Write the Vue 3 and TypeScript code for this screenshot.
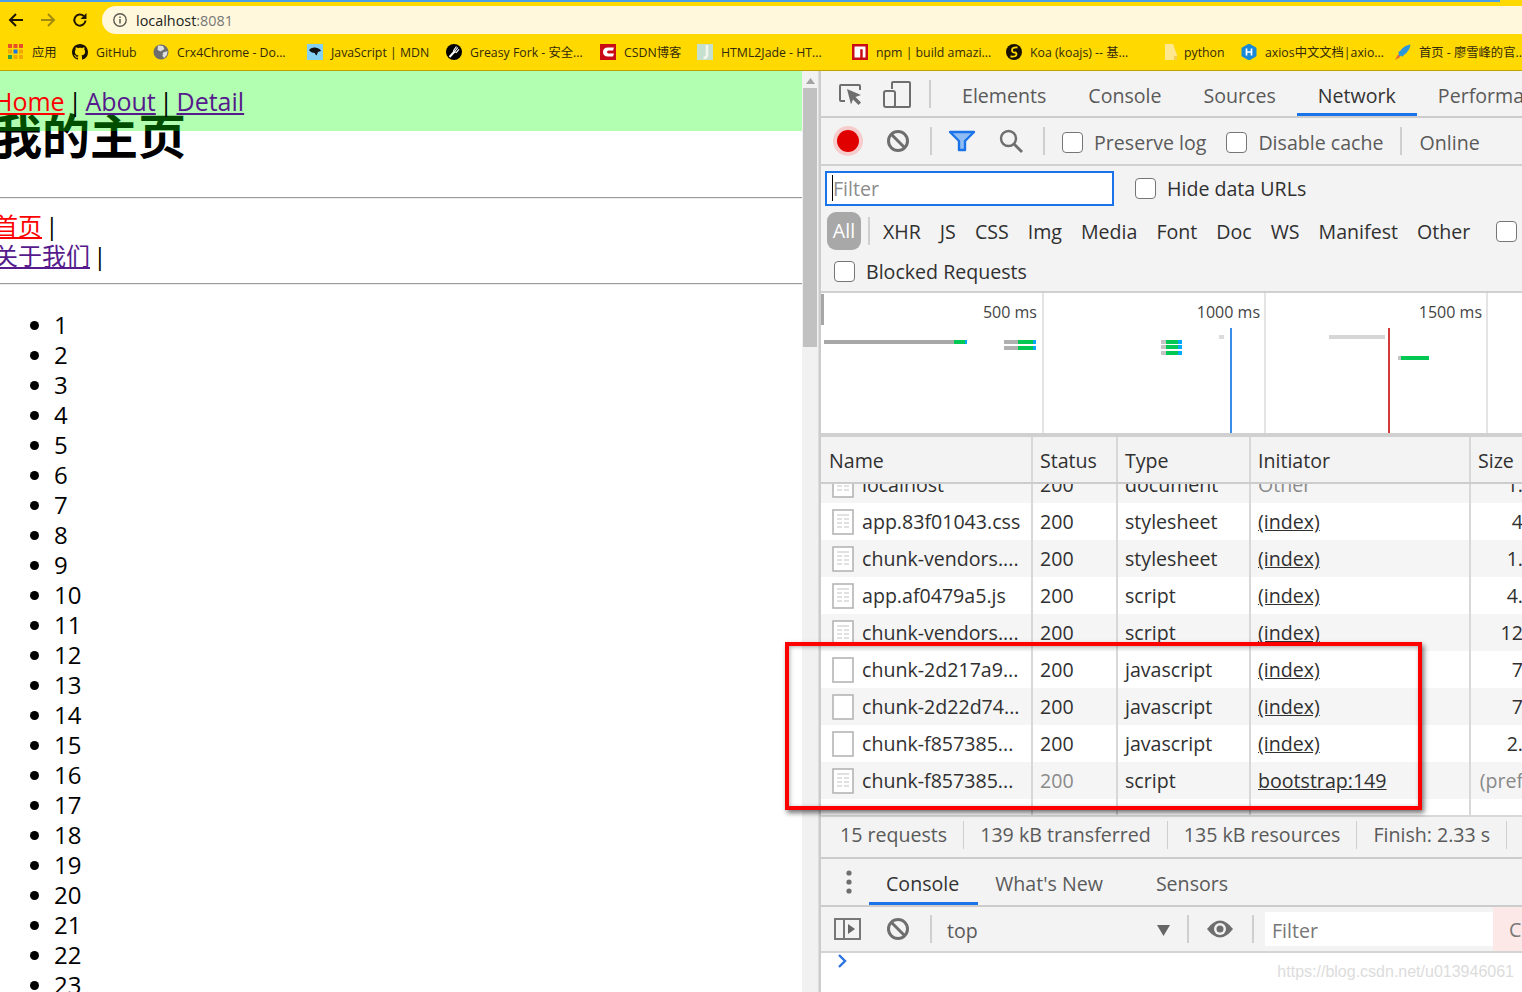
<template>
  <div class="screen">
    <!-- 浏览器顶栏 -->
    <header class="chrome">
      <div class="progress"></div>
      <div class="nav-row">
        <button class="nav-btn">
          <svg width="18" height="18" viewBox="0 0 18 18"><path d="M16 9H3M9 3L3 9l6 6" fill="none" stroke="#201600" stroke-width="2"/></svg>
        </button>
        <button class="nav-btn">
          <svg width="18" height="18" viewBox="0 0 18 18"><path d="M2 9h13M9 3l6 6-6 6" fill="none" stroke="#a58a10" stroke-width="2"/></svg>
        </button>
        <button class="nav-btn">
          <svg width="18" height="18" viewBox="0 0 18 18"><path d="M14.5 9.5A5.6 5.6 0 1 1 12.8 5" fill="none" stroke="#201600" stroke-width="2"/><path d="M15.5 2v6h-6z" fill="#201600"/></svg>
        </button>
        <div class="omnibox">
          <svg width="16" height="16" viewBox="0 0 16 16"><circle cx="8" cy="8" r="6.2" fill="none" stroke="#5c5a50" stroke-width="1.4"/><path d="M8 7v4.4M8 4.4v1.5" stroke="#5c5a50" stroke-width="1.5"/></svg>
          <span class="url">localhost<span class="port">:8081</span></span>
        </div>
      </div>
      <div class="bookmarks">
        <div v-for="b in bookmarks" :key="b.label" class="bookmark" :class="{ tight: b.icon === 'folder' }" :style="{ width: b.w + 'px' }">
          <svg class="bm-icon" width="16" height="16" viewBox="0 0 16 16">
            <template v-if="b.icon === 'apps'">
              <rect v-for="c in appDots" :key="c.k" :x="c.x" :y="c.y" width="4" height="4" :fill="c.fill" />
            </template>
            <path v-else-if="b.icon === 'github'" fill="#1a1200" d="M8 0C3.58 0 0 3.58 0 8c0 3.54 2.29 6.53 5.47 7.59.4.07.55-.17.55-.38 0-.19-.01-.82-.01-1.49-2.01.37-2.53-.49-2.69-.94-.09-.23-.48-.94-.82-1.13-.28-.15-.68-.52-.01-.53.63-.01 1.08.58 1.23.82.72 1.21 1.87.87 2.33.66.07-.52.28-.87.51-1.07-1.78-.2-3.64-.89-3.64-3.95 0-.87.31-1.59.82-2.15-.08-.2-.36-1.02.08-2.12 0 0 .67-.21 2.2.82.64-.18 1.32-.27 2-.27s1.36.09 2 .27c1.53-1.04 2.2-.82 2.2-.82.44 1.1.16 1.92.08 2.12.51.56.82 1.27.82 2.15 0 3.07-1.87 3.75-3.65 3.95.29.25.54.73.54 1.48 0 1.07-.01 1.93-.01 2.2 0 .21.15.46.55.38A8.01 8.01 0 0 0 16 8c0-4.42-3.58-8-8-8z" />
            <template v-else-if="b.icon === 'globe'">
              <circle cx="8" cy="8" r="7.5" fill="#6d6d6d" />
              <path d="M5 1.500l5 .5 1.500 3-4 2.500-3-1.500zM10 8.500l4.500-1.500-.5 4-3 3-1.500-2z" fill="#dedede" />
            </template>
            <template v-else-if="b.icon === 'mdn'">
              <rect width="16" height="16" fill="#83d0f2" />
              <path d="M2 6q2-3 6-2.500 5 .5 6 3.500-2 .5-3 1l-1.500 3.500-1.500-1.500V9Q4 9 2 6z" fill="#111" />
            </template>
            <template v-else-if="b.icon === 'greasy'">
              <circle cx="8" cy="8" r="8" fill="#000" />
              <path d="M3.500 13l5-5.500" stroke="#fff" stroke-width="2" />
              <path d="M7.500 6.500l3-4M8.800 7.500l3-4M10 8.800l3-3.500" stroke="#fff" stroke-width="1.200" />
              <path d="M7.500 6.500l2 2.300" stroke="#fff" stroke-width="1.500" />
            </template>
            <template v-else-if="b.icon === 'csdn'">
              <rect width="16" height="16" fill="#ca0c16" />
              <path d="M14 3.500H8Q3 3.700 3 8t5 4.500h5l1-3H8.500Q7 9.400 7 8t1.500-1.500H13z" fill="#fff" />
            </template>
            <template v-else-if="b.icon === 'jade'">
              <rect x="0" width="16" height="16" fill="#c6e0cf" />
              <path d="M10 1v10q0 3-3.500 3" fill="none" stroke="#f4f6ee" stroke-width="2.600" />
            </template>
            <template v-else-if="b.icon === 'npm'">
              <rect width="16" height="16" fill="#cb0c12" />
              <path d="M2.500 2.500h11v11h-2.800V5.300H8.200v8.200H2.500z" fill="#fff" />
            </template>
            <template v-else-if="b.icon === 'koa'">
              <circle cx="8" cy="8" r="8" fill="#1a1200" />
              <path d="M11.500 3.500Q6 3 6 6t3.500 2.500q2 1.500 0 3.500-2 1-5 .5" fill="none" stroke="#ffd900" stroke-width="1.800" />
            </template>
            <template v-else-if="b.icon === 'folder'">
              <path d="M2 0h8l4 11v5H2z" fill="#ffe88f" />
              <path d="M11 12h3v4h-3z" fill="#f6cf4f" />
            </template>
            <template v-else-if="b.icon === 'hex'">
              <path d="M8 0l7 4v8l-7 4-7-4V4z" fill="#1789d8" stroke="#1789d8" stroke-linejoin="round" />
              <path d="M5.500 4.500v7M10.500 4.500v7M5.500 8h5" stroke="#fff" stroke-width="1.700" />
            </template>
            <template v-else>
              <path d="M15.500 .5Q9 1.500 5.500 6.500L3 8.500l1 1-1 2.500 1.500 .5 2-1 .5 1.500 2.500-2.500Q14.500 7 15.500 .5z" fill="#2a96dc" />
              <path d="M0 16l3-5.500 2.500 2.500z" fill="#ee6a32" />
            </template>
          </svg>
          <span class="bm-label">{{ b.label }}</span>
        </div>
      </div>
    </header>

    <main class="workspace">
      <!-- 页面内容 -->
      <section class="page">
        <nav class="page-nav">
          <a class="link-active">Home</a> | <a class="link-visited">About</a> | <a class="link-visited">Detail</a>
        </nav>
        <div class="page-body">
          <h1>我的主页</h1>
          <hr />
          <div class="sub-nav">
            <div><a class="link-active">首页</a> |</div>
            <div><a class="link-visited">关于我们</a> |</div>
          </div>
          <hr />
          <ul>
            <li v-for="n in 23" :key="n">{{ n }}</li>
          </ul>
        </div>
      </section>

      <div class="scrollbar">
        <svg class="scroll-arrow" width="9" height="6" viewBox="0 0 9 6"><path d="M4.500 0L9 6H0z" fill="#a3a3a3" /></svg>
        <div class="scroll-thumb"></div>
      </div>

      <!-- DevTools -->
      <section class="devtools">
        <div class="dt-tabs">
          <span class="dt-icons">
            <svg width="28" height="28" viewBox="0 0 28 28"><path d="M9 21H5Q4 21 4 20V6Q4 5 5 5h18q1 0 1 1v4" fill="none" stroke="#6e6e6e" stroke-width="2"/><path d="M11 9l14 6-5.500 2 5.500 5.500-2.500 2.500-5.500-5.500-2 5z" fill="#6e6e6e"/></svg>
            <svg width="28" height="28" viewBox="0 0 28 28"><path d="M9 9V3q0-1 1-1h16q1 0 1 1v23q0 1-1 1H4" fill="none" stroke="#6e6e6e" stroke-width="2"/><rect x="1" y="11" width="11" height="16" rx="2" fill="#f3f3f3" stroke="#6e6e6e" stroke-width="2"/></svg>
          </span>
          <i class="vsep"></i>
          <span v-for="t in mainTabs" :key="t" class="dt-tab" :class="{ active: t === 'Network' }">{{ t }}</span>
        </div>

        <div class="dt-toolbar">
          <svg class="record" width="32" height="32" viewBox="0 0 32 32"><circle cx="16" cy="16" r="15" fill="#f6cccc"/><circle cx="16" cy="16" r="11" fill="#e00000"/></svg>
          <svg class="tool" width="26" height="26" viewBox="0 0 26 26"><circle cx="13" cy="13" r="9.500" fill="none" stroke="#6e6e6e" stroke-width="3"/><path d="M6.500 6.500l13 13" stroke="#6e6e6e" stroke-width="3"/></svg>
          <i class="vsep"></i>
          <svg class="tool funnel" width="28" height="24" viewBox="0 0 28 24"><path d="M2 3h24l-9 9v9h-6v-9z" fill="#8fbdf3" stroke="#1a73e8" stroke-width="2.400" stroke-linejoin="round"/></svg>
          <svg class="tool" width="26" height="26" viewBox="0 0 26 26"><circle cx="10.500" cy="10.500" r="7.500" fill="none" stroke="#6e6e6e" stroke-width="2.400"/><path d="M16 16l8 8" stroke="#6e6e6e" stroke-width="2.800"/></svg>
          <i class="vsep"></i>
          <label class="check muted"><i class="box"></i>Preserve log</label>
          <label class="check muted"><i class="box"></i>Disable cache</label>
          <i class="vsep"></i>
          <span class="muted online">Online</span>
        </div>

        <div class="dt-filter">
          <div class="filter-input"><i class="caret"></i>Filter</div>
          <label class="check"><i class="box"></i>Hide data URLs</label>
        </div>

        <div class="dt-types">
          <span class="pill">All</span>
          <i class="vsep"></i>
          <span v-for="t in types" :key="t" class="type">{{ t }}</span>
          <i class="box types-box"></i>
        </div>

        <div class="dt-blocked">
          <label class="check"><i class="box"></i>Blocked Requests</label>
        </div>

        <!-- 时间线，条形按时间定位 -->
        <div class="overview">
          <i class="handle"></i>
          <i v-for="g in gridLines" :key="g" class="grid-line" :style="{ left: g + 'px' }"></i>
          <span v-for="l in timeLabels" :key="l.t" class="time-label" :style="{ right: l.r + 'px' }">{{ l.t }}</span>
          <i
            v-for="(b, i) in timeBars"
            :key="i"
            class="time-bar"
            :style="{ left: b.x + 'px', top: b.y + 'px', width: b.w + 'px', height: b.h + 'px', background: b.c }"
          ></i>
        </div>

        <div class="net-head">
          <span v-for="c in columns" :key="c" class="cell">{{ c }}</span>
        </div>

        <div class="net-rows">
          <div class="net-rows-inner">
            <div v-for="(r, i) in rows" :key="i" class="net-row" :class="{ odd: i % 2 === 0 }">
              <span class="cell name-cell">
                <svg width="22" height="26" viewBox="0 0 22 26" class="file-icon">
                  <rect x="1" y="1" width="20" height="24" fill="#fff" stroke="#b5b5b5" stroke-width="1.600"/>
                  <path v-if="r.lines" d="M5 6h12M5 10h5M12 10h5M5 14h5M12 14h5M5 18h5M12 18h5" stroke="#d8d8d8" stroke-width="1.500"/>
                </svg>
                {{ r.name }}
              </span>
              <span class="cell" :class="{ dim: r.dim }">{{ r.status }}</span>
              <span class="cell">{{ r.type }}</span>
              <span class="cell" :class="{ dim: r.initDim }"><u v-if="!r.initDim">{{ r.init }}</u><template v-else>{{ r.init }}</template></span>
              <span class="cell size-cell" :class="{ dim: r.sizeDim }">{{ r.size }}</span>
            </div>
            <div class="net-row">
              <span v-for="c in columns" :key="c" class="cell"></span>
            </div>
          </div>
        </div>

        <div class="net-summary">
          <span v-for="s in summary" :key="s">{{ s }}</span>
        </div>

        <div class="drawer-tabs">
          <svg width="6" height="24" viewBox="0 0 6 24"><circle cx="3" cy="3" r="2.600" fill="#6e6e6e"/><circle cx="3" cy="12" r="2.600" fill="#6e6e6e"/><circle cx="3" cy="21" r="2.600" fill="#6e6e6e"/></svg>
          <span class="drawer-tab active">Console</span>
          <span class="drawer-tab">What's New</span>
          <span class="drawer-tab">Sensors</span>
        </div>

        <div class="console-bar">
          <svg width="28" height="24" viewBox="0 0 28 24"><rect x="1" y="2" width="25" height="20" fill="none" stroke="#777" stroke-width="2"/><path d="M10 2v20" stroke="#777" stroke-width="2"/><path d="M14 7l7 5-7 5z" fill="#666"/></svg>
          <svg class="stop" width="26" height="26" viewBox="0 0 26 26"><circle cx="13" cy="13" r="9.500" fill="none" stroke="#6e6e6e" stroke-width="3"/><path d="M6.500 6.500l13 13" stroke="#6e6e6e" stroke-width="3"/></svg>
          <i class="vsep"></i>
          <span class="context">top<svg width="13" height="11" viewBox="0 0 13 11"><path d="M0 0h13L6.500 11z" fill="#666"/></svg></span>
          <i class="vsep"></i>
          <svg class="eye" width="28" height="20" viewBox="0 0 28 20"><path d="M1 10Q14-7 27 10 14 27 1 10z" fill="#6e6e6e"/><circle cx="14" cy="10" r="6" fill="#f3f3f3"/><circle cx="14" cy="10" r="3.500" fill="#6e6e6e"/></svg>
          <i class="vsep"></i>
          <span class="console-filter">Filter</span>
          <span class="console-flag">C</span>
        </div>

        <div class="console-body">
          <svg width="10" height="14" viewBox="0 0 10 14"><path d="M2 1l6 6-6 6" fill="none" stroke="#2a73e0" stroke-width="2.400"/></svg>
          <span class="watermark">https://blog.csdn.net/u013946061</span>
        </div>
      </section>

      <!-- 截图上的红色标注框 -->
      <div class="annotation"></div>
    </main>
  </div>
</template>

<script setup lang="ts">
interface Bookmark {
  label: string
  icon: string
  w: number
}

interface NetRow {
  name: string
  status: string
  type: string
  init: string
  size: string
  lines: boolean
  dim?: boolean
  initDim?: boolean
  sizeDim?: boolean
}

const bookmarks: Bookmark[] = [
  { label: '应用', icon: 'apps', w: 64 },
  { label: 'GitHub', icon: 'github', w: 81 },
  { label: 'Crx4Chrome - Do...', icon: 'globe', w: 154 },
  { label: 'JavaScript | MDN', icon: 'mdn', w: 139 },
  { label: 'Greasy Fork - 安全...', icon: 'greasy', w: 154 },
  { label: 'CSDN博客', icon: 'csdn', w: 97 },
  { label: 'HTML2Jade - HT...', icon: 'jade', w: 155 },
  { label: 'npm | build amazi...', icon: 'npm', w: 154 },
  { label: 'Koa (koajs) -- 基...', icon: 'koa', w: 157 },
  { label: 'python', icon: 'folder', w: 78 },
  { label: 'axios中文文档|axio...', icon: 'hex', w: 154 },
  { label: '首页 - 廖雪峰的官...', icon: 'rocket', w: 127 }
]

const dotColors = ['#e8502a', '#e8502a', '#e8502a', '#f2a600', '#1a73e8', '#f2a600', '#2e9e48', '#f2a600', '#f2a600']
const appDots = dotColors.map((fill, k) => ({ k, fill, x: (k % 3) * 5.500, y: Math.floor(k / 3) * 5.500 }))

const mainTabs = ['Elements', 'Console', 'Sources', 'Network', 'Performa']
const types = ['XHR', 'JS', 'CSS', 'Img', 'Media', 'Font', 'Doc', 'WS', 'Manifest', 'Other']
const columns = ['Name', 'Status', 'Type', 'Initiator', 'Size']
const summary = ['15 requests', '139 kB transferred', '135 kB resources', 'Finish: 2.33 s']

const gridLines = [221, 443, 665]
const timeLabels = [
  { t: '500 ms', r: 485 },
  { t: '1000 ms', r: 262 },
  { t: '1500 ms', r: 40 }
]

const timeBars = [
  { x: 3, y: 47, w: 130, h: 4, c: '#a8a8a8' },
  { x: 133, y: 47, w: 11, h: 4, c: '#00c853' },
  { x: 144, y: 47, w: 2, h: 4, c: '#03a9f4' },
  { x: 183, y: 47, w: 14, h: 4, c: '#b0b0b0' },
  { x: 197, y: 47, w: 15, h: 4, c: '#00c853' },
  { x: 212, y: 47, w: 3, h: 4, c: '#03a9f4' },
  { x: 183, y: 53, w: 14, h: 4, c: '#b0b0b0' },
  { x: 197, y: 53, w: 15, h: 4, c: '#00c853' },
  { x: 212, y: 53, w: 3, h: 4, c: '#03a9f4' },
  { x: 340, y: 47, w: 5, h: 4, c: '#c4c4c4' },
  { x: 345, y: 47, w: 12, h: 4, c: '#00c853' },
  { x: 357, y: 47, w: 4, h: 4, c: '#03a9f4' },
  { x: 340, y: 52, w: 5, h: 4, c: '#c4c4c4' },
  { x: 345, y: 52, w: 12, h: 4, c: '#00c853' },
  { x: 357, y: 52, w: 4, h: 4, c: '#03a9f4' },
  { x: 340, y: 58, w: 5, h: 4, c: '#c4c4c4' },
  { x: 345, y: 58, w: 12, h: 4, c: '#00c853' },
  { x: 357, y: 58, w: 4, h: 4, c: '#03a9f4' },
  { x: 398, y: 42, w: 5, h: 4, c: '#dcdcdc' },
  { x: 409, y: 35, w: 2, h: 105, c: '#3a8bea' },
  { x: 508, y: 42, w: 56, h: 4, c: '#d6d6d6' },
  { x: 567, y: 35, w: 2, h: 105, c: '#d33a3a' },
  { x: 577, y: 63, w: 3, h: 4, c: '#c4c4c4' },
  { x: 580, y: 63, w: 28, h: 4, c: '#00c853' }
]

const rows: NetRow[] = [
  { name: 'localhost', status: '200', type: 'document', init: 'Other', size: '1.', lines: true, initDim: true },
  { name: 'app.83f01043.css', status: '200', type: 'stylesheet', init: '(index)', size: '4', lines: true },
  { name: 'chunk-vendors....', status: '200', type: 'stylesheet', init: '(index)', size: '1.', lines: true },
  { name: 'app.af0479a5.js', status: '200', type: 'script', init: '(index)', size: '4.', lines: true },
  { name: 'chunk-vendors....', status: '200', type: 'script', init: '(index)', size: '12', lines: true },
  { name: 'chunk-2d217a9...', status: '200', type: 'javascript', init: '(index)', size: '7', lines: false },
  { name: 'chunk-2d22d74...', status: '200', type: 'javascript', init: '(index)', size: '7', lines: false },
  { name: 'chunk-f857385...', status: '200', type: 'javascript', init: '(index)', size: '2.', lines: false },
  { name: 'chunk-f857385...', status: '200', type: 'script', init: 'bootstrap:149', size: '(pref', lines: true, dim: true, sizeDim: true }
]
</script>

<style>
html,
body {
  margin: 0;
  overflow: hidden;
  background: #fff;
}
</style>

<style scoped>
.screen {
  width: 1522px;
  height: 992px;
  overflow: hidden;
  display: flex;
  flex-direction: column;
  font-family: "Open Sans", "Noto Sans CJK SC", sans-serif;
  color: #303030;
}

/* 顶栏 */
.chrome {
  height: 71px;
  flex: none;
  box-sizing: border-box;
  background: #ffd900;
  border-bottom: 1px solid #bfa300;
}

.progress {
  height: 2px;
  background: #4a9fe8;
  margin-right: 22px;
}

.nav-row {
  height: 32px;
  margin-top: 2px;
  display: flex;
  align-items: center;
}

.nav-btn {
  width: 32px;
  height: 32px;
  padding: 0;
  border: 0;
  background: none;
  display: flex;
  align-items: center;
  justify-content: center;
}

.omnibox {
  flex: 1;
  height: 28px;
  margin-left: 6px;
  padding-left: 10px;
  display: flex;
  align-items: center;
  gap: 8px;
  background: #fff8dd;
  border-radius: 14px 0 0 14px;
}

.url {
  font-size: 14.4px;
  color: #222;
}

.port {
  color: #777;
}

.bookmarks {
  height: 32px;
  display: flex;
  align-items: center;
  padding-left: 8px;
}

.bookmark {
  flex: none;
  display: flex;
  align-items: center;
  gap: 8px;
  white-space: nowrap;
}

.bookmark.tight {
  gap: 5px;
}

.bm-icon {
  flex: none;
}

.bm-label {
  font-size: 12.3px;
  color: #33290a;
}

/* 页面 */
.workspace {
  position: relative;
  flex: 1;
  display: flex;
  min-height: 0;
}

.page {
  position: relative;
  width: 802px;
  flex: none;
  overflow: hidden;
  font-size: 24px;
  color: #000;
}

.page-nav {
  position: absolute;
  inset: 0 0 auto 0;
  height: 60px;
  box-sizing: border-box;
  padding: 14px 0 0 0;
  margin-left: -6px;
  font-size: 25px;
  word-spacing: -3px;
  line-height: 33px;
  background: rgba(0, 255, 0, 0.3);
}

.page a {
  text-decoration: underline;
}

.link-active {
  color: #f00;
}

.link-visited {
  color: #551a8b;
}

.page-body {
  margin-left: -6px;
}

h1 {
  margin: 30px 0 0;
  font-size: 48px;
  line-height: 64px;
  font-weight: 700;
  font-family: "Noto Sans CJK SC", sans-serif;
}

hr {
  margin: 0;
  border: 0;
  border-top: 1px solid #9a9a9a;
  border-bottom: 1px solid #eee;
}

.page-body h1 + hr {
  margin-top: 32px;
}

.sub-nav {
  padding: 12px 0 12px;
  line-height: 30px;
  word-spacing: -3px;
}

ul {
  margin: 25px 0 0;
  padding-left: 60px;
}

li {
  line-height: 30px;
}

.scrollbar {
  width: 16px;
  flex: none;
  background: #f1f1f1;
  display: flex;
  flex-direction: column;
  align-items: center;
  border-right: 1px solid #ddd;
}

.scroll-arrow {
  margin-top: 7px;
}

.scroll-thumb {
  width: 14px;
  height: 259px;
  margin-top: 4px;
  background: #c1c1c1;
}

/* DevTools */
.devtools {
  flex: 1;
  min-width: 0;
  display: flex;
  flex-direction: column;
  background: #f3f3f3;
  border-left: 2px solid #ccc;
  font-size: 19.6px;
}

.vsep {
  display: block;
  width: 2px;
  height: 28px;
  flex: none;
  background: #cfcfcf;
}

.dt-tabs {
  height: 47px;
  flex: none;
  box-sizing: border-box;
  border-bottom: 2px solid #ccc;
  display: flex;
  align-items: center;
  padding-left: 15px;
  white-space: nowrap;
  overflow: hidden;
}

.dt-icons {
  display: flex;
  gap: 19px;
  margin-right: 18px;
}

.dt-tab {
  height: 45px;
  line-height: 49px;
  flex: none;
  padding: 0 21px;
  color: #5a5a5a;
  box-sizing: border-box;
}

.dt-tabs .vsep + .dt-tab {
  margin-left: 10px;
}

.dt-tab.active {
  color: #333;
  border-bottom: 3px solid #1a73e8;
}

.dt-toolbar {
  height: 48px;
  flex: none;
  box-sizing: border-box;
  border-bottom: 2px solid #d0d0d0;
  display: flex;
  align-items: center;
  padding-left: 11px;
  white-space: nowrap;
}

.dt-toolbar .check,
.online {
  padding-top: 2px;
}

.record {
  margin-right: 21px;
}

.tool {
  margin-right: 19px;
}

.tool.funnel {
  margin-right: 22px;
}

.tool + .vsep {
  margin-right: 16px;
}

.check {
  display: flex;
  align-items: center;
  gap: 11px;
}

.box {
  display: block;
  width: 21px;
  height: 21px;
  flex: none;
  box-sizing: border-box;
  background: #fff;
  border: 1px solid #767676;
  border-radius: 4px;
}

.muted {
  color: #5a5a5a;
}

.dt-toolbar .check {
  margin-right: 20px;
}

.dt-toolbar .check:first-of-type {
  margin-left: 1px;
}

.dt-toolbar .check + .vsep {
  margin-left: -4px;
}

.online {
  margin-left: 18px;
}

.dt-filter {
  height: 44px;
  flex: none;
  display: flex;
  align-items: center;
  padding-left: 4px;
}

.filter-input {
  width: 289px;
  height: 35px;
  box-sizing: border-box;
  border: 2px solid #1a73e8;
  background: #fff;
  color: #8c8c8c;
  display: flex;
  align-items: center;
  padding-left: 5px;
  margin-right: 21px;
}

.caret {
  display: block;
  width: 1px;
  height: 26px;
  background: #000;
}

.dt-types {
  height: 42px;
  flex: none;
  display: flex;
  align-items: center;
  padding-left: 6px;
  white-space: nowrap;
  position: relative;
}

.pill {
  width: 34px;
  height: 38px;
  flex: none;
  line-height: 38px;
  text-align: center;
  color: #fff;
  background: #a8a8a8;
  border-radius: 9px;
  margin-right: 7px;
}

.type {
  margin-left: 13px;
  margin-right: 6px;
  flex: none;
}

.types-box {
  margin-left: 20px;
}

.dt-blocked {
  height: 41px;
  flex: none;
  box-sizing: border-box;
  border-bottom: 2px solid #d0d0d0;
  padding-left: 13px;
  display: flex;
  align-items: center;
}

.overview {
  position: relative;
  height: 144px;
  flex: none;
  box-sizing: border-box;
  background: #fff;
  border-bottom: 4px solid #d0d0d0;
  overflow: hidden;
}

.handle {
  position: absolute;
  left: 0;
  top: 1px;
  width: 3px;
  height: 31px;
  background: #a6a6a6;
}

.grid-line {
  position: absolute;
  top: 0;
  bottom: 0;
  width: 2px;
  background: #e4e4e4;
}

.time-label {
  position: absolute;
  top: 8px;
  font-size: 16px;
  color: #444;
  white-space: nowrap;
}

.time-bar {
  position: absolute;
}

.net-head {
  height: 47px;
  flex: none;
  box-sizing: border-box;
  display: flex;
  border-bottom: 2px solid #ccc;
  line-height: 48px;
  white-space: nowrap;
}

.cell {
  flex: none;
  box-sizing: border-box;
  padding-left: 7px;
  border-right: 2px solid #d8d8d8;
  overflow: hidden;
  white-space: nowrap;
}

.cell:nth-child(1) {
  width: 212px;
  padding-left: 8px;
}

.cell:nth-child(2) {
  width: 85px;
}

.cell:nth-child(3) {
  width: 133px;
}

.cell:nth-child(4) {
  width: 220px;
}

.cell:nth-child(5) {
  width: 52px;
  border-right: 0;
}

.net-rows {
  height: 331px;
  flex: none;
  background: #fff;
  overflow: hidden;
}

.net-rows-inner {
  margin-top: -18px;
}

.net-row {
  height: 37px;
  display: flex;
  line-height: 37px;
  background: #fff;
}

.net-row.odd {
  background: #f5f5f5;
}

.cell.name-cell {
  display: flex;
  align-items: center;
  gap: 8px;
  padding-left: 11px;
}

.file-icon {
  flex: none;
}

.dim {
  color: #8a8a8a;
}

.cell.size-cell {
  text-align: right;
  padding: 0;
}

.net-summary {
  height: 44px;
  flex: none;
  box-sizing: border-box;
  display: flex;
  align-items: center;
  padding: 0 0 4px 2px;
  border-top: 2px solid #d8d8d8;
  border-bottom: 2px solid #ccc;
  color: #5a5a5a;
}

.net-summary span {
  padding: 0 16px;
  line-height: 28px;
  border-right: 1px solid #cfcfcf;
  white-space: nowrap;
}

.net-summary span:first-child {
  padding-left: 17px;
}

.drawer-tabs {
  height: 48px;
  flex: none;
  box-sizing: border-box;
  display: flex;
  align-items: center;
  border-bottom: 2px solid #ccc;
  padding-left: 25px;
}

.drawer-tab {
  height: 46px;
  line-height: 50px;
  box-sizing: border-box;
  padding: 0 17px;
  color: #5a5a5a;
}

.drawer-tab.active {
  color: #333;
  border-bottom: 3px solid #1a73e8;
  margin-left: 17px;
  padding-right: 19px;
}

.drawer-tab:last-child {
  margin-left: 19px;
}

.console-bar {
  height: 46px;
  flex: none;
  box-sizing: border-box;
  border-bottom: 2px solid #d4d4d4;
  display: flex;
  align-items: center;
  padding-left: 13px;
  white-space: nowrap;
}

.stop {
  margin: 0 19px 0 23px;
}

.context {
  width: 255px;
  box-sizing: border-box;
  padding: 2px 17px 0 15px;
  display: flex;
  align-items: center;
  justify-content: space-between;
  color: #5a5a5a;
}

.eye {
  margin: 0 18px 0 17px;
}

.console-filter {
  width: 228px;
  height: 34px;
  margin-left: 11px;
  padding-left: 7px;
  box-sizing: border-box;
  background: #fff;
  line-height: 38px;
  color: #777;
}

.console-flag {
  flex: 1;
  height: 44px;
  line-height: 46px;
  padding-left: 16px;
  background: #fde8e8;
  color: #777;
}

.console-body {
  flex: 1;
  position: relative;
  background: #fff;
  padding: 0 0 0 16px;
}

.console-body svg {
  display: block;
  margin-top: 1px;
}

.watermark {
  position: absolute;
  right: 8px;
  top: 10px;
  font-size: 16px;
  font-family: "Liberation Sans", sans-serif;
  color: #dcdcdc;
  white-space: nowrap;
}

.annotation {
  position: absolute;
  left: 785px;
  top: 571px;
  width: 637px;
  height: 168px;
  box-sizing: border-box;
  border: 4px solid #f00;
  box-shadow: 2px 3px 5px rgba(0, 0, 0, 0.55), inset 1px 1px 4px rgba(0, 0, 0, 0.3);
  pointer-events: none;
}
</style>
